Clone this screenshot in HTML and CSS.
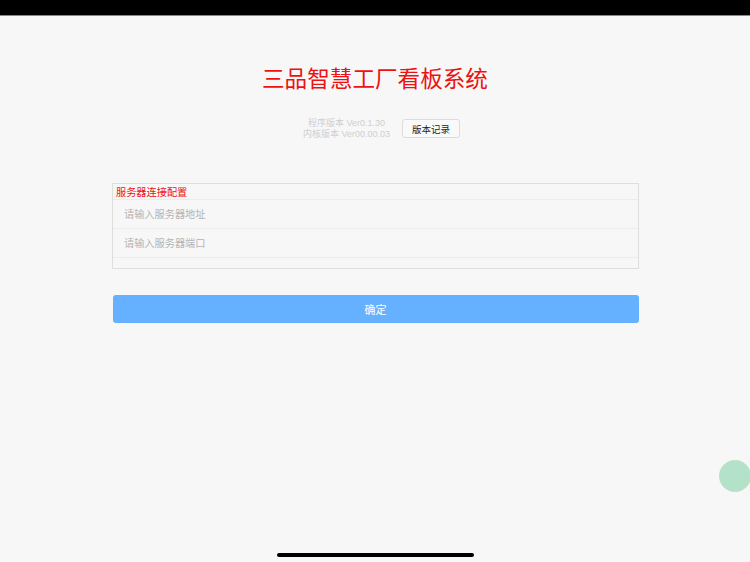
FILE: index.html
```html
<!DOCTYPE html>
<html lang="zh-CN">
<head>
<meta charset="utf-8">
<title>三品智慧工厂看板系统</title>
<link rel="stylesheet" href="styles.css">
</head>
<body>
<div class="statusbar"></div>
<main class="page">
  <h1 class="title">三品智慧工厂看板系统</h1>
  <div class="version-row">
    <div class="version-text">
      <div>程序版本 Ver0.1.30</div>
      <div>内核版本 Ver00.00.03</div>
    </div>
    <button class="btn-log">版本记录</button>
  </div>
  <section class="card">
    <div class="card-label">服务器连接配置</div>
    <div class="card-row">请输入服务器地址</div>
    <div class="card-row">请输入服务器端口</div>
    <div class="card-row empty"></div>
  </section>
  <button class="btn-ok">确定</button>
</main>
<div class="float-ball"></div>
<div class="home-indicator"></div>
</body>
</html>
```
FILE: styles.css
```css
html, body {
  margin: 0;
  padding: 0;
}
body {
  width: 750px;
  height: 562px;
  overflow: hidden;
  background: #f7f7f7;
  font-family: "Liberation Sans", "Noto Sans CJK SC", sans-serif;
  position: relative;
}
.statusbar {
  height: 15px;
  background: #000;
  border-bottom: 1px solid #8a8a8a;
}
.page {
  display: flex;
  flex-direction: column;
  align-items: center;
  padding-top: 48px;
}
.title {
  margin: 0;
  font-family: "Noto Sans CJK SC", sans-serif;
  font-weight: 400;
  font-size: 22.6px;
  line-height: 28px;
  color: #ee1111;
  letter-spacing: 0;
}
.version-row {
  display: flex;
  align-items: center;
  gap: 12px;
  margin-top: 26px;
  margin-left: 13px;
}
.version-text {
  text-align: center;
  font-size: 9px;
  line-height: 10.5px;
  color: #cfcfcf;
}
.btn-log {
  width: 58px;
  height: 19px;
  padding: 0;
  border: 1px solid #dcdcdc;
  border-radius: 3px;
  background: #f9f9f9;
  font-family: "Noto Sans CJK SC", sans-serif;
  font-size: 9.5px;
  color: #222;
}
.card {
  box-sizing: border-box;
  width: 527px;
  margin-top: 44px;
  margin-left: 1px;
  border: 1px solid #dedede;
  display: flex;
  flex-direction: column;
}
.card-label {
  height: 15px;
  line-height: 15px;
  padding-left: 3px;
  font-family: "Noto Sans CJK SC", sans-serif;
  font-size: 10.2px;
  color: #ee1111;
  border-bottom: 1px solid #ececec;
}
.card-row {
  height: 28px;
  line-height: 28px;
  padding-left: 11px;
  font-family: "Noto Sans CJK SC", sans-serif;
  font-size: 10.2px;
  color: #b4b4b4;
  border-bottom: 1px solid #ececec;
}
.card-row.empty {
  height: 10px;
  border-bottom: none;
}
.btn-ok {
  width: 526px;
  height: 28px;
  margin-top: 26px;
  margin-left: 1px;
  padding: 0;
  border: none;
  border-radius: 3px;
  background: #66b1ff;
  color: #fff;
  font-family: "Noto Sans CJK SC", sans-serif;
  font-size: 11px;
}
.float-ball {
  position: absolute;
  left: 719px;
  top: 460px;
  width: 32px;
  height: 32px;
  border-radius: 50%;
  background: #b3e2c8;
}
.home-indicator {
  position: absolute;
  left: 277px;
  top: 553px;
  width: 197px;
  height: 4px;
  border-radius: 2px;
  background: #000;
}
```
